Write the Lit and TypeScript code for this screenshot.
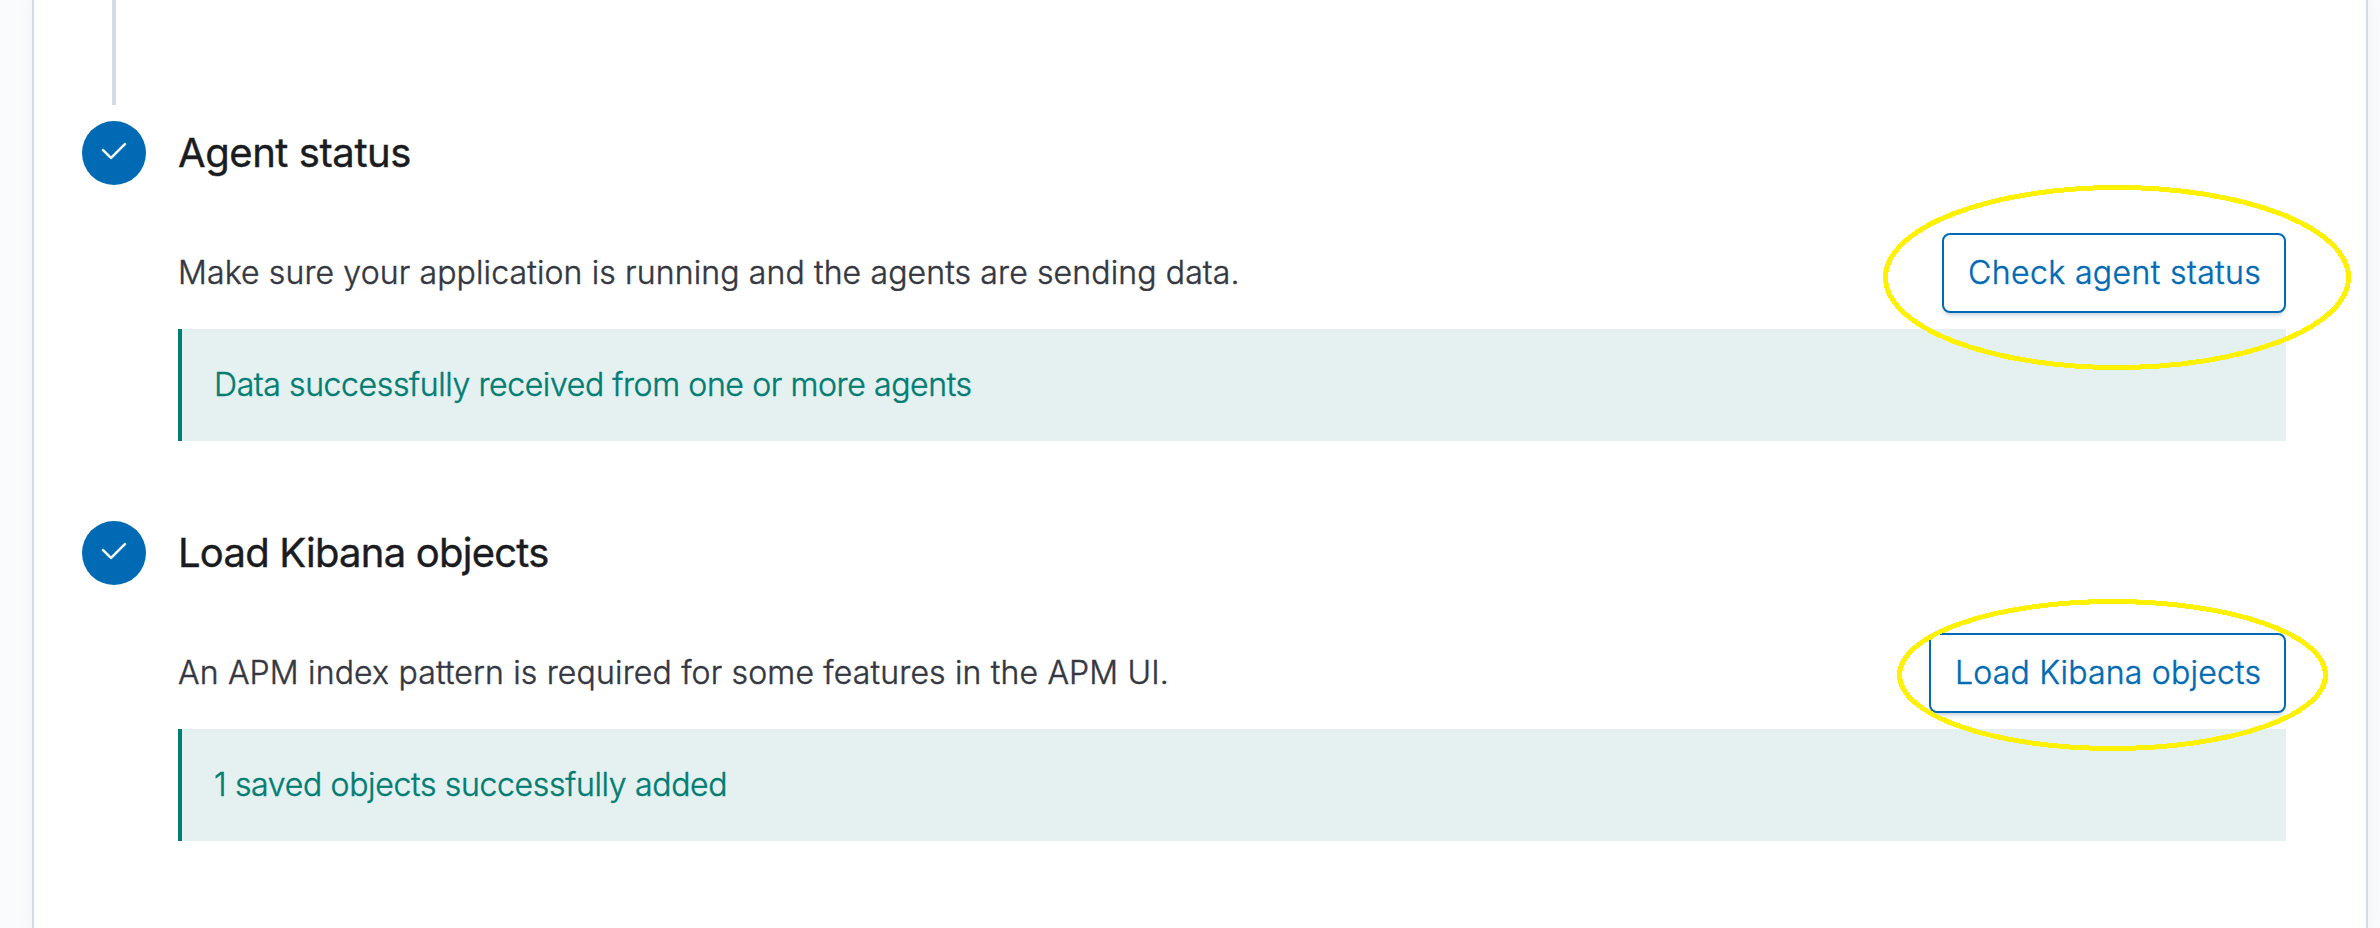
import { LitElement, html, css } from "lit";
import { customElement, property } from "lit/decorators.js";

interface Step {
  key: string;
  title: string;
  text: string;
  action: string;
  message: string;
}

const STEPS: Step[] = [
  {
    key: "agent",
    title: "Agent status",
    text: "Make sure your application is running and the agents are sending data.",
    action: "Check agent status",
    message: "Data successfully received from one or more agents",
  },
  {
    key: "objects",
    title: "Load Kibana objects",
    text: "An APM index pattern is required for some features in the APM UI.",
    action: "Load Kibana objects",
    message: "1 saved objects successfully added",
  },
];

@customElement("setup-step")
class SetupStep extends LitElement {
  @property({ attribute: false }) step!: Step;

  static styles = css`
    :host {
      display: block;
    }
    .header {
      display: flex;
      align-items: center;
      gap: 32px;
      height: 64px;
    }
    .badge {
      flex: none;
      box-sizing: border-box;
      width: 64px;
      height: 64px;
      padding: 14px 16px 18px;
      border-radius: 50%;
      background: #006bb4;
    }
    .badge svg {
      display: block;
      width: 32px;
      height: 32px;
      fill: #fff;
      stroke: #fff;
      stroke-width: 0.25;
    }
    .title {
      margin: 0;
      font-size: 40px;
      line-height: 64px;
      font-weight: 400;
      -webkit-text-stroke: 0.4px currentColor;
      color: #1a1c21;
      white-space: nowrap;
    }
    .agent .title {
      letter-spacing: -0.43px;
    }
    .objects .title {
      letter-spacing: -0.77px;
    }
    .content {
      display: flex;
      flex-direction: column;
      gap: 16px;
      padding: 48px 0 0 96px;
    }
    .row {
      display: flex;
      align-items: center;
      justify-content: space-between;
      height: 80px;
    }
    .text,
    .action,
    .callout {
      -webkit-text-stroke: 0.45px currentColor;
    }
    .text {
      margin: 0;
      font-size: 32px;
      line-height: 48px;
      font-weight: 300;
      letter-spacing: 0.133px;
      color: #343741;
    }
    .objects .text {
      letter-spacing: 0.17px;
    }
    .action {
      box-sizing: border-box;
      height: 80px;
      padding: 0 0 0 24px;
      border: 2px solid #006bb4;
      border-radius: 8px;
      background: #fff;
      box-shadow: 0 4px 4px -2px rgba(54, 97, 126, 0.3);
      color: #006bb4;
      font: 300 32px/48px "Inter", sans-serif;
      text-align: left;
      white-space: nowrap;
    }
    .agent .action {
      width: 344px;
      letter-spacing: 0.4px;
    }
    .objects .action {
      width: 357px;
      letter-spacing: 0.2px;
    }
    .callout {
      box-sizing: border-box;
      height: 112px;
      padding: 32px;
      border-left: 4px solid #017d73;
      background: #e5f1f0;
      color: #017d73;
      font-size: 32px;
      line-height: 48px;
      font-weight: 300;
      letter-spacing: -0.385px;
    }
    .objects .callout {
      letter-spacing: -0.33px;
    }
  `;

  render() {
    const s = this.step;
    return html`
      <section class=${s.key}>
        <div class="header">
          <span class="badge">
            <svg viewBox="0 0 16 16" aria-hidden="true">
              <path d="M6.5 12a.502.502 0 01-.354-.146l-4-4a.502.502 0 01.708-.708L6.5 10.793l6.646-6.647a.502.502 0 01.708.708l-7 7A.502.502 0 016.5 12" />
            </svg>
          </span>
          <h2 class="title">${s.title}</h2>
        </div>
        <div class="content">
          <div class="row">
            <p class="text">${s.text}</p>
            <button class="action">${s.action}</button>
          </div>
          <div class="callout">${s.message}</div>
        </div>
      </section>
    `;
  }
}

@customElement("app-root")
class AppRoot extends LitElement {
  static styles = css`
    :host {
      display: block;
      position: relative;
      box-sizing: border-box;
      height: 928px;
      padding: 0 12px 0 32px;
      overflow: hidden;
      background: #fafbfd;
      font-family: "Inter", sans-serif;
    }
    .panel {
      box-sizing: border-box;
      height: 928px;
      padding: 0 80px 0 48px;
      border: solid #d3dae6;
      border-width: 0 2px;
      background: #fff;
      box-shadow: 0 0 14px rgba(152, 162, 179, 0.12);
    }
    .line {
      width: 4px;
      height: 105px;
      margin: 0 0 16px 30px;
      background: #d3dae6;
    }
    .steps {
      display: flex;
      flex-direction: column;
      gap: 80px;
    }
    .marks {
      position: absolute;
      left: 0;
      top: 0;
      width: 2380px;
      height: 928px;
      pointer-events: none;
      fill: none;
      stroke: #fff200;
      stroke-width: 5px;
      shape-rendering: crispEdges;
    }
  `;

  render() {
    return html`
      <main class="panel">
        <div class="line"></div>
        <div class="steps">
          ${STEPS.map((s) => html`<setup-step .step=${s}></setup-step>`)}
        </div>
      </main>
      <svg class="marks" viewBox="0 0 2380 928" aria-hidden="true">
        <ellipse cx="2117" cy="277.5" rx="231.5" ry="90" />
        <ellipse cx="2112.5" cy="675" rx="213" ry="73.5" />
      </svg>
    `;
  }
}
